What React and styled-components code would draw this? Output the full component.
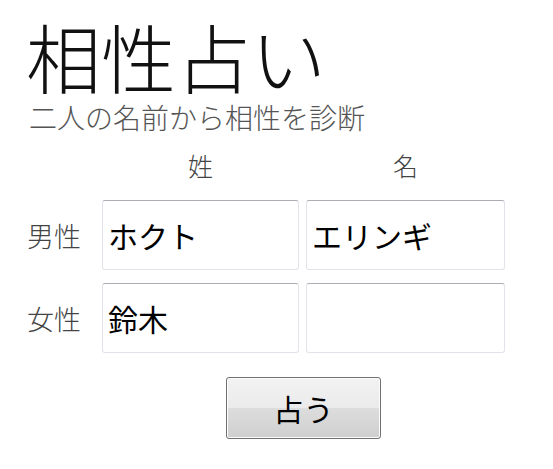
import React from "react";
import styled, { createGlobalStyle } from "styled-components";

const Global = createGlobalStyle`
  html, body { margin: 0; padding: 0; background: #fff; }
  body { font-family: "Noto Sans CJK JP", "Noto Sans", sans-serif; color: #000; }
`;

const Page = styled.div`
  padding: 16px 0 0 26px;
  display: flex;
  flex-direction: column;
`;

const Title = styled.h1`
  margin: 0;
  font-size: 75px;
  font-weight: 300;
  line-height: 80px;
  color: #111;
`;

const Subtitle = styled.p`
  margin: 4px 0 0;
  font-size: 28px;
  font-weight: 300;
  line-height: 34px;
  color: #555;
  padding-left: 3px;
`;

const Form = styled.div`
  display: grid;
  grid-template-columns: 69px 197px 199px;
  column-gap: 7px;
  row-gap: 13px;
  margin-top: 16px;
  align-items: center;
`;

const ColHead = styled.div`
  font-size: 25px;
  font-weight: 300;
  color: #444;
  text-align: center;
  line-height: 30px;
  margin-bottom: 7px;
`;

const RowLabel = styled.div`
  font-size: 27px;
  font-weight: 300;
  color: #444;
  padding-left: 1px;
`;

const Field = styled.input`
  box-sizing: border-box;
  width: 100%;
  height: 70px;
  border: 1px solid #e2e3ea;
  border-top-color: #abadb3;
  border-radius: 3px;
  padding: 0 5px;
  font-family: "Noto Sans CJK JP", sans-serif;
  font-size: 30px;
  font-weight: 400;
  color: #000;
  background: #fff;
  outline: none;
`;

const ButtonRow = styled.div`
  display: flex;
  padding-left: 200px;
  margin-top: 24px;
`;

const Button = styled.button`
  width: 155px;
  height: 62px;
  border: 1px solid #707070;
  border-radius: 3px;
  background: linear-gradient(#f2f2f2 0%, #ebebeb 50%, #dddddd 50%, #cfcfcf 100%);
  box-shadow: inset 0 0 0 1px #fcfcfc;
  font-family: "Noto Sans CJK JP", sans-serif;
  font-size: 30px;
  font-weight: 400;
  color: #000;
  padding: 0;
`;

export default function App() {
  return (
    <>
      <Global />
      <Page>
        <Title>相性占い</Title>
        <Subtitle>二人の名前から相性を診断</Subtitle>
        <Form>
          <span />
          <ColHead>姓</ColHead>
          <ColHead>名</ColHead>
          <RowLabel>男性</RowLabel>
          <Field defaultValue="ホクト" />
          <Field defaultValue="エリンギ" />
          <RowLabel>女性</RowLabel>
          <Field defaultValue="鈴木" />
          <Field defaultValue="" />
        </Form>
        <ButtonRow>
          <Button>占う</Button>
        </ButtonRow>
      </Page>
    </>
  );
}
